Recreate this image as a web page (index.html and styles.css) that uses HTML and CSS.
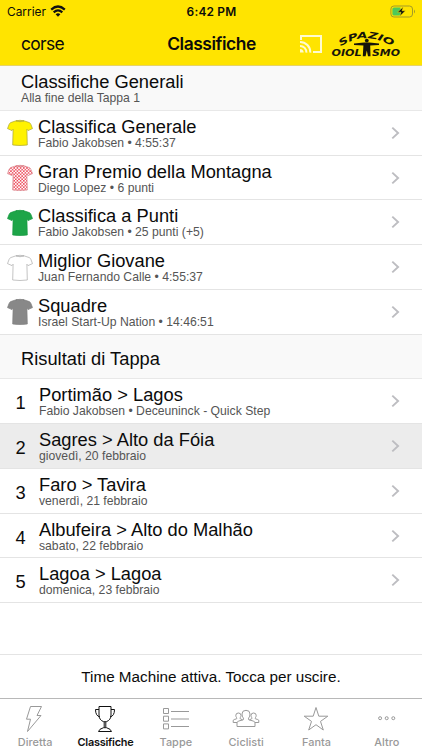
FILE: index.html
```html
<!DOCTYPE html>
<html lang="it">
<head>
<meta charset="utf-8">
<title>Classifiche</title>
<link rel="stylesheet" href="styles.css">
</head>
<body>
<svg class="defs" aria-hidden="true">
  <defs>
    <pattern id="dots" width="3.2" height="3.2" patternUnits="userSpaceOnUse">
      <rect width="3.2" height="3.2" fill="#fff"/>
      <circle cx=".8" cy=".8" r=".88" fill="#ec3f50"/><circle cx="2.4" cy="2.4" r=".88" fill="#ec3f50"/>
    </pattern>
    <symbol id="shirt" viewBox="0 0 26 28">
      <path d="M9 1.8 Q13 3.6 17 1.8 L22.3 3.6 Q23.4 4.2 23.9 5.4 L25.5 9.6 L21 11.6 L19.9 10.2 L20.3 26 Q13 27 5.7 26 L6.1 10.2 L5 11.6 L.5 9.6 L2.1 5.4 Q2.6 4.2 3.7 3.6Z"/>
      <path d="M9 1.8 Q13 .8 17 1.8 Q13 3.6 9 1.8Z"/>
    </symbol>
    <symbol id="chevron" viewBox="0 0 9 14"><path d="M1.3 1.6 L7.1 7 L1.3 12.4" fill="none" stroke="#bdbdc1" stroke-width="1.9"/></symbol>
  </defs>
</svg>
<main class="app">
  <header class="top">
    <div class="status">
      <div class="carrier">Carrier
        <svg width="16" height="12" viewBox="0 0 16 12"><g fill="none" stroke="#111" stroke-width="2.2"><path d="M1.2 4.6 Q8 -1.6 14.8 4.6"/><path d="M3.7 7.4 Q8 3.4 12.3 7.4"/></g><path d="M5.6 9.2 Q8 7.2 10.4 9.2 L8 11.7Z" fill="#111"/></svg>
      </div>
      <div class="clock">6:42 PM</div>
      <svg class="battery" width="26" height="13" viewBox="0 0 26 13"><rect x=".9" y="1" width="21.6" height="11" rx="3" fill="none" stroke="#a39a28"/><path d="M4 2.5 H10.5 V10.5 H4 Q2.4 10.5 2.4 9 V4 Q2.4 2.5 4 2.5Z" fill="#4cc95a"/><path d="M24 4.5 Q26 6.5 24 8.5Z" fill="#a39a28"/><path d="M13.3 1.8 L7.5 7.2 H11 L9.8 11.3 L15.5 5.8 H12Z" fill="#111" stroke="#ffe400" stroke-width=".5"/></svg>
    </div>
    <nav class="navbar">
      <div class="back">corse</div>
      <h1>Classifiche</h1>
      <div class="tools">
        <svg width="24" height="20" viewBox="0 0 24 20"><g fill="none" stroke="#fffbd0" stroke-width="2"><path d="M2 6 V2 H22 V18 H14"/><path d="M1 7.9 A10.3 10.3 0 0 1 11.3 18.6"/><path d="M1 11.9 A6.3 6.3 0 0 1 7.4 18.6"/></g><path d="M1 15 A4 4 0 0 1 4.7 18.6 H1Z" fill="#fffbd0"/></svg>
        <svg class="logo" width="72" height="30" viewBox="0 0 72 30">
          <path id="arc" d="M10.5 17.5 Q36 1 62 17.5" fill="none"/>
          <text class="logo-text" font-size="9"><textPath href="#arc" textLength="55" lengthAdjust="spacingAndGlyphs">SPAZIO</textPath></text>
          <text class="logo-text" x="1.5" y="27" font-size="9" textLength="30" lengthAdjust="spacingAndGlyphs">OIOL</text>
          <text class="logo-text" x="42" y="27" font-size="9" textLength="28" lengthAdjust="spacingAndGlyphs">SMO</text>
          <g fill="#16140a"><circle cx="36.8" cy="11.6" r="1.9"/><path d="M24 14.4 L34.2 13.6 H39.4 L49 14.4 V16 L40.2 16.5 L40.5 27.3 H38 L36.8 21.5 L35.6 27.3 H32.8 L33.4 16.5 L24 16Z"/></g>
        </svg>
      </div>
    </nav>
  </header>

  <section class="list">
    <header class="group"><h2>Classifiche Generali</h2><p>Alla fine della Tappa 1</p></header>
    <article class="row"><svg class="shirt yellow"><use href="#shirt"/></svg><div class="copy"><h3>Classifica Generale</h3><p>Fabio Jakobsen • 4:55:37</p></div><svg class="chevron"><use href="#chevron"/></svg></article>
    <article class="row"><svg class="shirt dotted"><use href="#shirt"/></svg><div class="copy"><h3>Gran Premio della Montagna</h3><p>Diego Lopez • 6 punti</p></div><svg class="chevron"><use href="#chevron"/></svg></article>
    <article class="row"><svg class="shirt green"><use href="#shirt"/></svg><div class="copy"><h3>Classifica a Punti</h3><p>Fabio Jakobsen • 25 punti (+5)</p></div><svg class="chevron"><use href="#chevron"/></svg></article>
    <article class="row"><svg class="shirt white"><use href="#shirt"/></svg><div class="copy"><h3>Miglior Giovane</h3><p>Juan Fernando Calle • 4:55:37</p></div><svg class="chevron"><use href="#chevron"/></svg></article>
    <article class="row"><svg class="shirt gray"><use href="#shirt"/></svg><div class="copy"><h3>Squadre</h3><p>Israel Start-Up Nation • 14:46:51</p></div><svg class="chevron"><use href="#chevron"/></svg></article>
    <header class="group single"><h2>Risultati di Tappa</h2></header>
    <article class="row stage"><span class="number">1</span><div class="copy"><h3>Portimão &gt; Lagos</h3><p>Fabio Jakobsen • Deceuninck - Quick Step</p></div><svg class="chevron"><use href="#chevron"/></svg></article>
    <article class="row stage selected"><span class="number">2</span><div class="copy"><h3>Sagres &gt; Alto da Fóia</h3><p>giovedì, 20 febbraio</p></div><svg class="chevron"><use href="#chevron"/></svg></article>
    <article class="row stage"><span class="number">3</span><div class="copy"><h3>Faro &gt; Tavira</h3><p>venerdì, 21 febbraio</p></div><svg class="chevron"><use href="#chevron"/></svg></article>
    <article class="row stage"><span class="number">4</span><div class="copy"><h3>Albufeira &gt; Alto do Malhão</h3><p>sabato, 22 febbraio</p></div><svg class="chevron"><use href="#chevron"/></svg></article>
    <article class="row stage"><span class="number">5</span><div class="copy"><h3>Lagoa &gt; Lagoa</h3><p>domenica, 23 febbraio</p></div><svg class="chevron"><use href="#chevron"/></svg></article>
  </section>

  <div class="notice">Time Machine attiva. Tocca per uscire.</div>

  <footer class="tabs">
    <div class="tab"><svg viewBox="0 0 28 28"><path d="M9.5 1.5 H20.5 L16 10.5 H20 L6.5 26.5 L9.5 14.2 H5.5Z"/></svg><span>Diretta</span></div>
    <div class="tab active"><svg viewBox="0 0 28 28"><path d="M8 1.5 H20 V10 Q20 15 15.3 16.7 H12.7 Q8 15 8 10Z M8 4.5 H4.5 Q4.5 11 9 12 M20 4.5 H23.5 Q23.5 11 19 12 M13.2 17 V22.5 M14.8 17 V22.5 M7.5 26.5 Q8 24 12.5 22.7 H15.5 Q20 24 20.5 26.5Z"/></svg><span>Classifiche</span></div>
    <div class="tab"><svg viewBox="0 0 28 28"><path d="M1.5 3.5 H6.5 V8.5 H1.5Z M1.5 11.2 H6.5 V16.2 H1.5Z M1.5 18.9 H6.5 V23.9 H1.5Z M9 6.5 H27 M9 14 H27 M9 21.5 H27"/></svg><span>Tappe</span></div>
    <div class="tab"><svg viewBox="0 0 28 28"><path d="M5 21.5 V17.3 Q5.5 16 11.2 14.8 Q12 14 11.2 12.8 Q10 11.5 10 9 Q10 5.3 14 5.3 Q18 5.3 18 9 Q18 11.5 16.8 12.8 Q16 14 16.8 14.8 Q22.5 16 23 17.3 V21.5Z M5 17.5 H1.2 V15.3 Q1.6 14.5 4.6 13.8 Q5 13.2 4.5 12.5 Q3.8 11.5 3.8 10.4 Q3.8 8 6.4 8 Q9 8 9 10.4 Q9 11.5 8.3 12.5 Q7.8 13.2 8.3 13.8 L10.5 14.8 M23 17.5 H26.8 V15.3 Q26.4 14.5 23.4 13.8 Q23 13.2 23.5 12.5 Q24.2 11.5 24.2 10.4 Q24.2 8 21.6 8 Q19 8 19 10.4 Q19 11.5 19.7 12.5 Q20.2 13.2 19.7 13.8 L17.5 14.8"/></svg><span>Ciclisti</span></div>
    <div class="tab"><svg viewBox="0 0 28 28"><path d="M14 2.5 L16.8 11.2 H25.8 L18.5 16.4 L21.3 25 L14 19.7 L6.7 25 L9.5 16.4 L2.2 11.2 H11.2Z"/></svg><span>Fanta</span></div>
    <div class="tab"><svg viewBox="0 0 28 28"><circle cx="7.1" cy="13.2" r="1.5"/><circle cx="13.7" cy="13.2" r="1.5"/><circle cx="20.3" cy="13.2" r="1.5"/></svg><span>Altro</span></div>
  </footer>
</main>
</body>
</html>
```
FILE: styles.css
```css
* { box-sizing: border-box; }
body { margin: 0; background: #fff; color: #0b0b0b; font-family: "Liberation Sans", Arial, sans-serif; }
h1, h2, h3, p { margin: 0; font-weight: 400; }
.defs { position: absolute; width: 0; height: 0; }
.app { width: 422px; height: 750px; display: flex; flex-direction: column; overflow: hidden; }
.top { height: 66px; background: #ffe400; border-bottom: 1px solid #e6d36a; font-family: Inter, sans-serif; flex: none; }
.status { height: 22px; display: grid; grid-template-columns: 1fr auto 1fr; align-items: center; padding: 0 6px 0 7px; font-size: 11.9px; }
.carrier { display: flex; align-items: center; gap: 4px; }
.clock { font-weight: 600; letter-spacing: .2px; }
.battery { justify-self: end; }
.navbar { height: 43px; display: grid; grid-template-columns: 1fr auto 1fr; align-items: center; padding: 0 20px 0 21px; }
.back { font-size: 17.4px; letter-spacing: -.65px; }
.navbar h1 { font-size: 17.4px; font-weight: 600; letter-spacing: -.45px; }
.tools { justify-self: end; display: flex; align-items: center; gap: 7px; }
.logo-text { font-family: "DejaVu Sans", sans-serif; font-weight: 700; font-style: italic; fill: #16140a; }
.group { height: 44.75px; padding: 5px 21px 0; background: #f9f9f9; border-bottom: 1px solid #e8e8e8; }
.group h2 { font-size: 18.3px; line-height: 21px; }
.group p { font-size: 12.2px; line-height: 13px; color: #555; }
.group.single { padding-top: 13px; }
.row { height: 44.75px; display: flex; padding: 0 22px 0 7px; border-bottom: 1px solid #e4e4e4; }
.shirt { width: 26px; height: 28px; margin: 8.5px 5px 0 0; stroke: #aaa; stroke-width: .7; flex: none; }
.yellow { fill: #fff200; stroke: #a9a338; }
.dotted { fill: url(#dots); stroke: #d9838a; }
.green { fill: #1da548; stroke: #16983f; }
.white { fill: #fff; }
.gray { fill: #888; stroke: #808080; }
.copy { flex: 1; padding-top: 5px; }
.copy h3 { font-size: 18.3px; line-height: 21px; white-space: nowrap; }
.copy p { font-size: 12.2px; line-height: 13px; color: #555; }
.chevron { width: 9px; height: 14px; margin-top: 15px; }
.number { width: 32px; padding-right: 5px; flex: none; text-align: center; font-size: 18.3px; line-height: 48px; }
.selected { background: #ececec; }
.notice { height: 44px; margin-top: auto; border-top: 1px solid #e4e4e4; flex: none; text-align: center; font-size: 15.25px; line-height: 44px; }
.tabs { height: 52px; flex: none; display: grid; grid-template-columns: repeat(6, 1fr); border-top: 1px solid #b8b8b8; padding-top: 6px; font-family: Inter, sans-serif; color: #999; }
.tab { display: flex; flex-direction: column; align-items: center; font-size: 10.9px; font-weight: 500; line-height: 14px; letter-spacing: .05px; gap: 2px; }
.tab svg { width: 28px; height: 28px; fill: none; stroke: currentColor; stroke-width: 1; }
.tab.active { color: #111; font-weight: 600; letter-spacing: -.25px; }
```
